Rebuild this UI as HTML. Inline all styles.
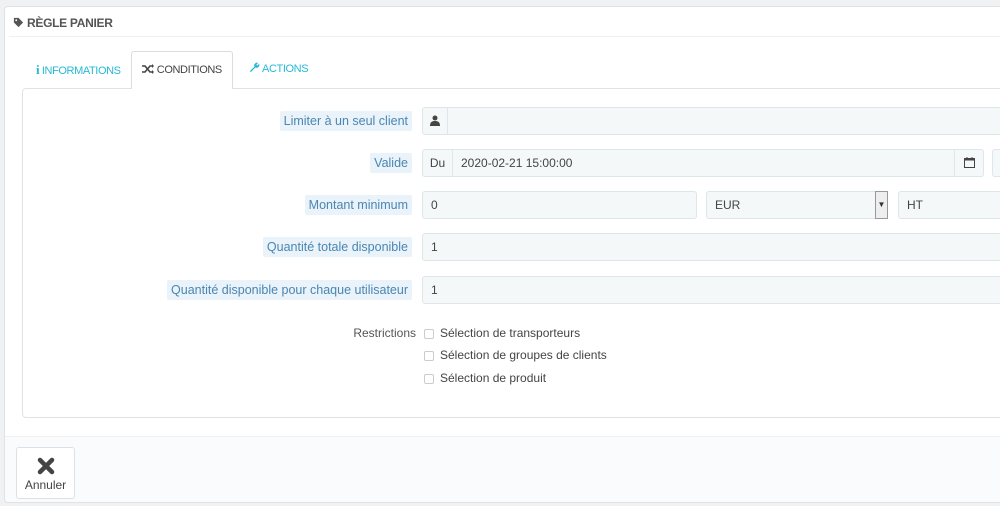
<!DOCTYPE html>
<html><head><meta charset="utf-8"><style>
*{box-sizing:border-box;margin:0;padding:0}
body{width:1000px;height:506px;background:#eff1f2;font-family:"Liberation Sans",sans-serif;position:relative;overflow:hidden;color:#555}
.panel{position:absolute;left:4px;top:6px;width:1000px;height:497px;background:#fff;border:1px solid #dfe3e5;border-radius:4px;overflow:hidden}
.hd{position:absolute;left:8px;top:9px;font-size:12px;color:#555;font-weight:bold;letter-spacing:-0.3px}
.sep{position:absolute;left:4px;right:0;top:29px;border-top:1px solid #eef0f1}
.tab{position:absolute;top:44px;height:37px;font-size:11px;line-height:37px;color:#25b9d7;letter-spacing:-0.4px}
.tab.act{background:#fff;border:1px solid #d8dde0;border-bottom:none;color:#444;border-radius:3px 3px 0 0;z-index:2;height:38px}
.box{position:absolute;left:17px;top:81px;width:990px;height:330px;border:1px solid #dfe3e5;border-radius:4px}
.lab{position:absolute;right:591px;height:20px;line-height:20px;font-size:12.5px;color:#4a86b3;background:#e9f3f9;padding:0 4px;border-radius:2px;white-space:nowrap}
.in{position:absolute;height:28px;background:#f5f8f9;border:1px solid #dde6e9;border-radius:3px;font-size:12px;line-height:26px;color:#444;padding-left:8px}
.add{position:absolute;height:28px;background:#f5f8f9;border:1px solid #dde6e9;font-size:12px;line-height:26px;color:#444;text-align:center}
.cb{position:absolute;left:419px;width:10px;height:10px;border:1px solid #c8cdd0;border-radius:2px}
.ct{position:absolute;left:435px;font-size:12px;color:#444}
.foot{position:absolute;left:0;top:429px;width:1000px;height:68px;background:#fafbfc;border-top:1px solid #eef0f1}
.btn{position:absolute;left:11px;top:10px;width:59px;height:52px;background:#fff;border:1px solid #dde1e3;border-radius:3px;font-size:12px;color:#444;text-align:center}
</style></head><body>
<div class="panel">
<div class="hd"><svg width="11" height="11" viewBox="0 0 12 12" style="vertical-align:-1px"><path d="M1 1h5l5 5-5 5-5-5z" fill="#555"/><circle cx="3.5" cy="3.5" r="1" fill="#fff"/></svg> RÈGLE PANIER</div>
<div class="sep"></div>
<div class="tab" style="left:31px"><b style="font-family:'Liberation Serif',serif;font-size:13px">i</b> INFORMATIONS</div>
<div class="tab act" style="left:126px;width:102px;text-align:center"><svg width="12" height="10" viewBox="0 0 12 10" style="vertical-align:-1px"><path d="M0 2h3l5 6h3M0 8h3l5-6h3" stroke="#444" stroke-width="1.6" fill="none"/><path d="M10 0l2 2-2 2zM10 6l2 2-2 2z" fill="#444"/></svg> CONDITIONS</div>
<div class="tab" style="left:244px"><svg width="11" height="11" viewBox="0 0 12 12" style="vertical-align:-1px"><path d="M1 10l5-5a3 3 0 0 1 4-4l-2 2 1 1 2-2a3 3 0 0 1-4 4l-5 5z" fill="#25b9d7"/></svg> ACTIONS</div>
<div class="box"></div>

<div class="lab" style="top:104px">Limiter à un seul client</div>
<div class="add" style="left:417px;top:100px;width:26px;border-radius:3px 0 0 3px"><svg width="10" height="11" viewBox="0 0 10 11" style="vertical-align:-1px"><circle cx="5" cy="3" r="2.5" fill="#444"/><path d="M0 11c0-4 2-5 5-5s5 1 5 5z" fill="#444"/></svg></div>
<div class="in" style="left:442px;top:100px;width:560px;border-radius:0"></div>

<div class="lab" style="top:146px">Valide</div>
<div class="add" style="left:417px;top:142px;width:31px;border-radius:3px 0 0 3px">Du</div>
<div class="in" style="left:447px;top:142px;width:503px;border-radius:0">2020-02-21 15:00:00</div>
<div class="add" style="left:949px;top:142px;width:30px;border-radius:0 3px 3px 0"><svg width="11" height="11" viewBox="0 0 11 11" style="vertical-align:-1px"><rect x="0.5" y="1.5" width="10" height="9" fill="none" stroke="#444"/><rect x="0.5" y="1.5" width="10" height="2" fill="#444"/><path d="M3 0v3M8 0v3" stroke="#444"/></svg></div>
<div class="in" style="left:987px;top:142px;width:30px"></div>

<div class="lab" style="top:188px">Montant minimum</div>
<div class="in" style="left:417px;top:184px;width:275px">0</div>
<div class="in" style="left:701px;top:184px;width:182px">EUR</div>
<div style="position:absolute;left:870px;top:184px;width:13px;height:28px;border:1px solid #999;background:#eee;font-size:8px;line-height:26px;text-align:center;color:#333">▼</div>
<div class="in" style="left:893px;top:184px;width:120px">HT</div>

<div class="lab" style="top:230px">Quantité totale disponible</div>
<div class="in" style="left:417px;top:226px;width:600px">1</div>

<div class="lab" style="top:273px">Quantité disponible pour chaque utilisateur</div>
<div class="in" style="left:417px;top:269px;width:600px">1</div>

<div style="position:absolute;right:587px;top:319px;font-size:12px;color:#555">Restrictions</div>
<div class="cb" style="top:322px"></div><div class="ct" style="top:319px">Sélection de transporteurs</div>
<div class="cb" style="top:344px"></div><div class="ct" style="top:341px">Sélection de groupes de clients</div>
<div class="cb" style="top:367px"></div><div class="ct" style="top:364px">Sélection de produit</div>

<div class="foot"><div class="btn"><svg width="18" height="18" viewBox="0 0 18 18" style="margin-top:9px"><path d="M3 3l12 12M15 3L3 15" stroke="#444" stroke-width="4.5" stroke-linecap="round"/></svg><div style="margin-top:0px">Annuler</div></div></div>
</div>
</body></html>
